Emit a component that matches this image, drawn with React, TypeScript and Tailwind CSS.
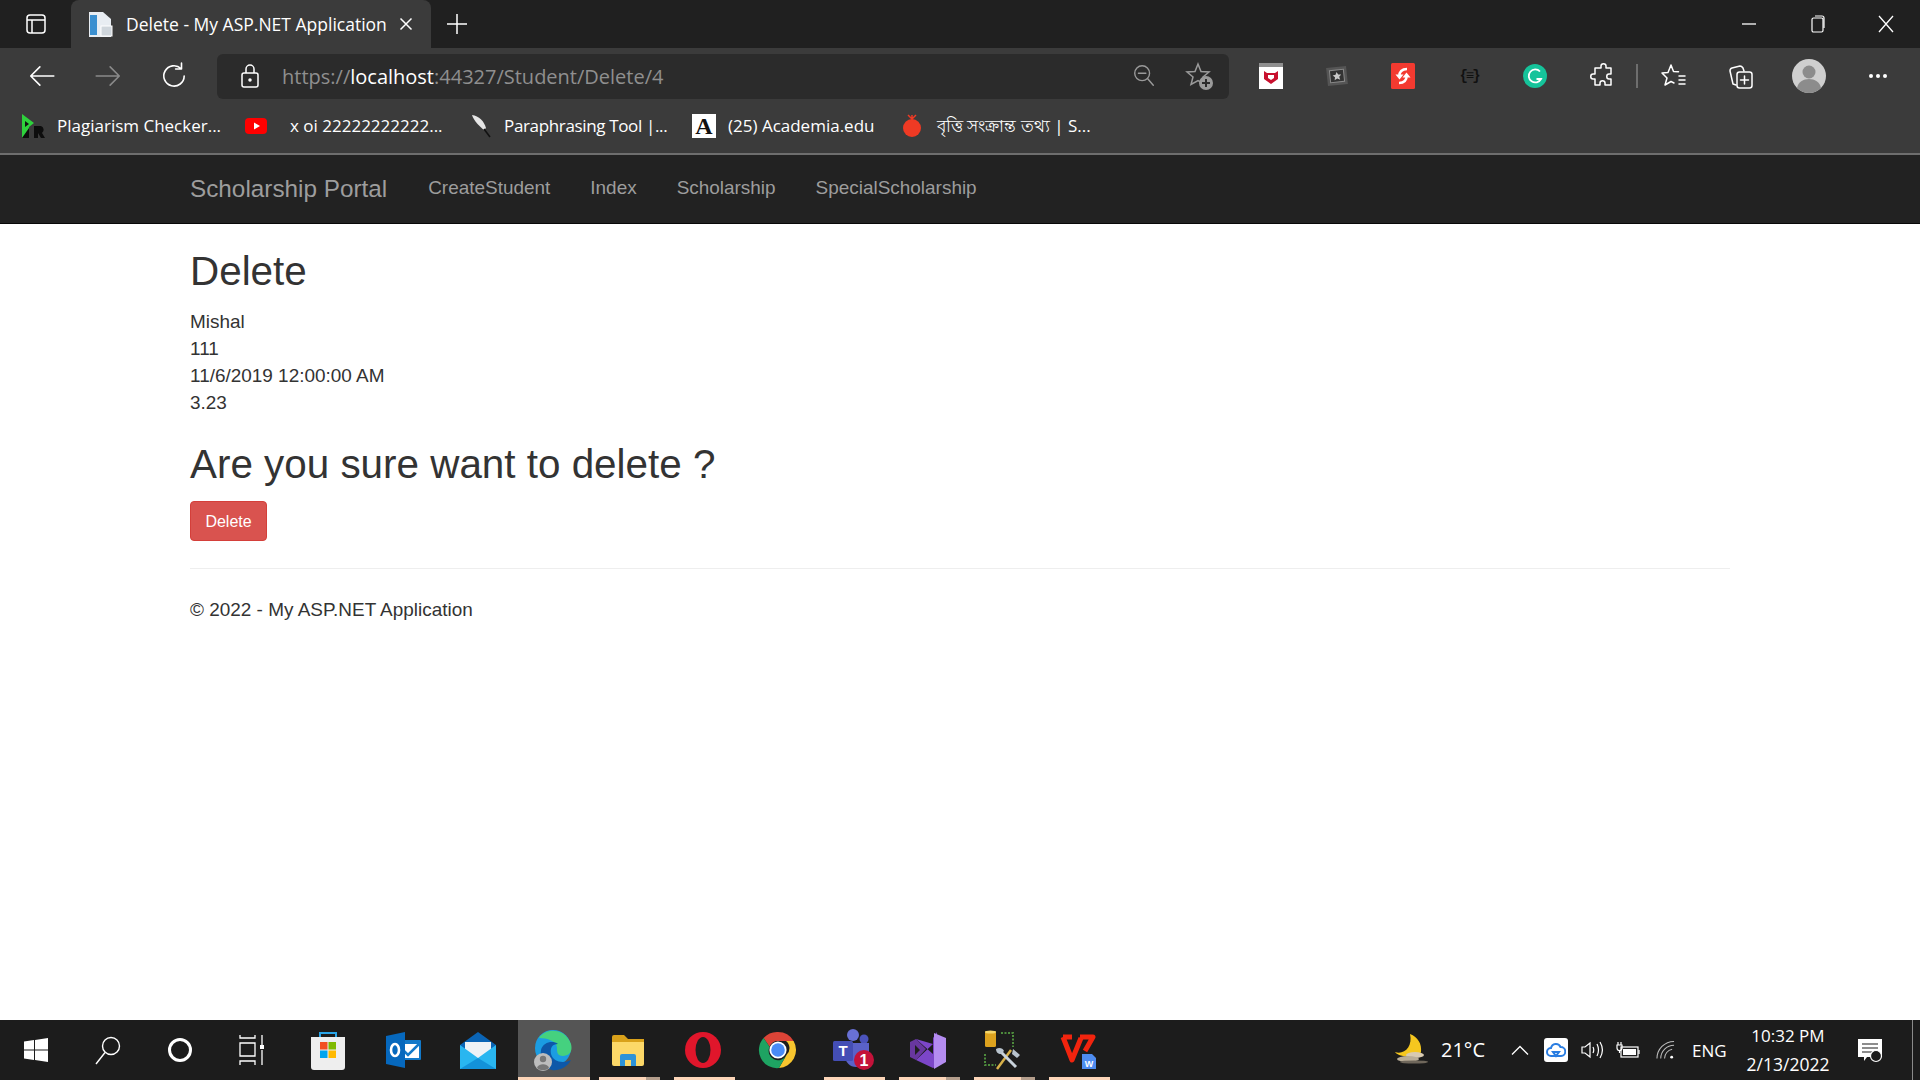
import React from "react";

const ui = "font-['Open_Sans','Noto_Sans',sans-serif]";

const Stroke = ({ size = 28, children }: { size?: number; children: React.ReactNode }) => (
  <svg width={size} height={size} viewBox="0 0 28 28" fill="none" stroke="currentColor" strokeWidth="1.5" strokeLinecap="round" strokeLinejoin="round">
    {children}
  </svg>
);

const Slot = ({ w, children }: { w: string; children: React.ReactNode }) => (
  <div className={`flex h-full items-center justify-center ${w}`}>{children}</div>
);

const Bookmark = ({ icon, text, w, cls = "", iconW = "w-[36px]" }: { icon: React.ReactNode; text: string; w: string; cls?: string; iconW?: string }) => (
  <div className={`flex items-center ${w}`}>
    <div className={`flex shrink-0 items-center ${iconW}`}>{icon}</div>
    <span className={`whitespace-nowrap text-[17px] text-white ${cls}`}>{text}</span>
  </div>
);

const TaskApp = ({ children, line, active, w = "w-[75px]" }: { children: React.ReactNode; line?: "plain" | "stack"; active?: boolean; w?: string }) => (
  <div className={`relative flex h-full shrink-0 items-center justify-center ${w}`}>
    {active && <div className="absolute inset-y-0 left-[3px] w-[72px] bg-[#555555]" />}
    <div className="relative flex">{children}</div>
    {active && <div className="absolute bottom-0 left-[3px] h-[3px] w-[72px] bg-[#fcd5b8]" />}
    {line && <div className="absolute bottom-0 left-[9px] h-[3px] w-[61px] bg-[#fcd5b8]" />}
    {line === "stack" && <div className="absolute bottom-0 left-[56px] h-[3px] w-[14px] bg-[#b49e8c]" />}
  </div>
);

const Store = () => (
  <svg width="40" height="40" viewBox="0 0 40 40">
    <path d="M12 7V3h16v4" fill="none" stroke="#2aa5e8" strokeWidth="2" />
    <path d="M3 7h34v30a3 3 0 0 1-3 3H6a3 3 0 0 1-3-3z" fill="#eeeeee" />
    <rect x="12" y="12" width="7.5" height="7.5" fill="#f25022" />
    <rect x="20.5" y="12" width="7.5" height="7.5" fill="#7fba00" />
    <rect x="12" y="20.5" width="7.5" height="7.5" fill="#00a4ef" />
    <rect x="20.5" y="20.5" width="7.5" height="7.5" fill="#ffb900" />
  </svg>
);

const Outlook = () => (
  <svg width="40" height="40" viewBox="0 0 40 40">
    <rect x="18" y="10" width="20" height="20" rx="1" fill="#1279c9" />
    <path d="M20 14h16v14H20z" fill="#fff" />
    <path d="M20 20l5 5 11-11" fill="none" stroke="#1279c9" strokeWidth="2.5" />
    <path d="M3 6l19-4v36L3 34z" fill="#0668bd" />
    <ellipse cx="12" cy="20" rx="4" ry="6" fill="none" stroke="#fff" strokeWidth="2.6" />
  </svg>
);

const Mail = () => (
  <svg width="40" height="40" viewBox="0 0 40 40">
    <path d="M2 15L20 2l18 13v24H2z" fill="#0a64b5" />
    <path d="M7 12h26v10L20 30 7 22z" fill="#eef2f6" />
    <path d="M2 15l18 13 18-13v24H2z" fill="#29b6f0" />
    <path d="M2 39l18-11 18 11z" fill="#1392d9" />
  </svg>
);

const Edge = () => (
  <svg width="40" height="44" viewBox="0 0 40 44">
    <circle cx="20" cy="20" r="18" fill="#1b9de2" />
    <path d="M6 10C12 0 32-1 38 16c2 8-2 12-8 12-6 0-6-4-6-8 0-7-10-10-18-10z" fill="#45d17f" />
    <path d="M8 22c2-8 12-10 17-6-6 0-8 4-7 10 2 8 12 10 20 6-4 8-13 11-19 10C12 40 6 32 8 22z" fill="#0e58a8" />
    <circle cx="10" cy="34" r="9" fill="#bdbdbd" />
    <circle cx="10" cy="31" r="3.2" fill="#777" />
    <path d="M4 40c1-5 11-5 12 0-3 3-9 3-12 0z" fill="#777" />
  </svg>
);

const Explorer = () => (
  <svg width="36" height="36" viewBox="0 0 36 36">
    <path d="M2 5a2 2 0 0 1 2-2h10l4 4h16v6H2z" fill="#d9a11a" />
    <path d="M2 10h32v22a2 2 0 0 1-2 2H4a2 2 0 0 1-2-2z" fill="#fcd868" />
    <path d="M10 34V24a2 2 0 0 1 2-2h12a2 2 0 0 1 2 2v10h-5v-6h-6v6z" fill="#2d93d8" />
  </svg>
);

const Opera = () => (
  <svg width="40" height="40" viewBox="0 0 40 40">
    <circle cx="20" cy="20" r="18" fill="#e0162b" />
    <ellipse cx="20" cy="20" rx="7.5" ry="13" fill="#1f1f1f" />
  </svg>
);

const Chrome = () => (
  <svg width="40" height="40" viewBox="0 0 40 40">
    <path d="M20 2a18 18 0 0 1 15.6 9H20a9 9 0 0 0-8.4 5.8L5.6 8A18 18 0 0 1 20 2z" fill="#db4437" />
    <path d="M35.6 11A18 18 0 0 1 21 38l7.8-13.5A9 9 0 0 0 28 11z" fill="#f7c52e" />
    <path d="M5.6 8a18 18 0 0 0 15.4 30l7.5-13a9 9 0 0 1-16.9-8.2z" fill="#1ea362" />
    <circle cx="20" cy="20" r="8.6" fill="#fff" />
    <circle cx="20" cy="20" r="6.8" fill="#4a8bf5" />
  </svg>
);

const Teams = () => (
  <svg width="44" height="44" viewBox="0 0 44 44">
    <circle cx="22" cy="7" r="6" fill="#6870d4" />
    <circle cx="33" cy="11" r="4.5" fill="#4b53bc" />
    <path d="M14 15h24v14a10 10 0 0 1-10 10h-3a11 11 0 0 1-11-11z" fill="#5a62c9" />
    <rect x="2" y="13" width="20" height="20" rx="1.5" fill="#444eb5" />
    <text x="12" y="28" textAnchor="middle" fontSize="15" fontWeight="700" fill="#fff" fontFamily="Liberation Sans">T</text>
    <circle cx="33" cy="32" r="10" fill="#c4123a" />
    <text x="33" y="38" textAnchor="middle" fontSize="16" fontWeight="700" fill="#fff" fontFamily="Liberation Sans">1</text>
  </svg>
);

const VisualStudio = () => (
  <svg width="38" height="40" viewBox="0 0 38 40">
    <path d="M1 12l6-3 10 10-10 11-6-3z" fill="#68379f" />
    <path d="M6 15v10l5-5z" fill="#1f1f1f" />
    <path d="M7 9l17 15V8l4-6v34l-4 2L7 30l17-16" fill="#7c46c8" />
    <path d="M25 3l12 5v24l-12 7z" fill="#b48cf0" />
  </svg>
);

const SqlTools = () => (
  <svg width="38" height="40" viewBox="0 0 38 40">
    <rect x="1" y="1" width="11" height="16" rx="1.500" fill="#dda21e" />
    <ellipse cx="6.500" cy="2" rx="5.500" ry="1.500" fill="#f5d66a" />
    <path d="M17 3h12v14M1 24v11h11" fill="none" stroke="#4d8b3c" strokeWidth="2" strokeDasharray="2 1.500" />
    <path d="M13 39l14-19" stroke="#d8b14a" strokeWidth="2.500" />
    <path d="M16 21l16 16" stroke="#c9d3dc" strokeWidth="3" />
    <path d="M29 19l7 6-3 3-5-4zM12 19c3-2 7-1 8 2l-3 3c-3 0-5-2-5-5z" fill="#b8c3cd" />
  </svg>
);

const Wps = () => (
  <svg width="38" height="40" viewBox="0 0 38 40">
    <path d="M4 7h9M4 7l9 23 9-22" fill="none" stroke="#f2240e" strokeWidth="5" strokeLinejoin="round" />
    <path d="M21 7h13l-8 14" fill="none" stroke="#f2240e" strokeWidth="5" strokeLinejoin="round" />
    <path d="M23 24h10l4 4v11H23z" fill="#4e8cf0" />
    <text x="30" y="37" textAnchor="middle" fontSize="9" fontWeight="700" fill="#fff" fontFamily="Liberation Sans">W</text>
  </svg>
);

const Moon = () => (
  <svg width="36" height="32" viewBox="0 0 36 32">
    <path d="M18 0c8 3 12 10 11 18-1 4-10 6-18 4C5 21 3 18 3 18c9 3 18-5 15-18z" fill="#f5c71f" />
    <ellipse cx="23" cy="21" rx="9" ry="3" fill="#d8cab2" />
    <ellipse cx="16" cy="25" rx="11" ry="3" fill="#b9ad98" />
    <ellipse cx="22" cy="28" rx="14" ry="1.6" fill="#6f675b" />
  </svg>
);

export default function App() {
  return (
    <div className={`flex h-[1080px] w-[1920px] flex-col overflow-hidden bg-white ${ui}`}>
      {/* title bar */}
      <div className="flex h-[48px] shrink-0 items-end bg-[#202020] text-white">
        <Slot w="w-[71px]">
          <svg width="24" height="24" viewBox="0 0 24 24" fill="none" stroke="currentColor" strokeWidth="1.5">
            <rect x="3" y="3" width="18" height="18" rx="3" />
            <path d="M3 8h18M8 8v13" />
          </svg>
        </Slot>
        <div className="flex h-[48px] w-[360px] items-center rounded-t-[8px] bg-[#3b3b3b] pl-[16px]">
          <svg width="26" height="28" viewBox="0 0 26 28" className="shrink-0">
            <path d="M2 2h14l8 7v18H2z" fill="#e8edf2" />
            <rect x="3" y="5" width="7" height="20" fill="#3a8fd0" />
            <rect x="14" y="16" width="11" height="10" fill="#cfd6dc" stroke="#fff" />
          </svg>
          <span className="ml-[13px] whitespace-nowrap text-[17.5px]">Delete - My ASP.NET Application</span>
          <svg width="16" height="16" viewBox="0 0 16 16" className="ml-[11px] shrink-0" stroke="currentColor" strokeWidth="1.5">
            <path d="M2.5 2.5l11 11M13.5 2.5l-11 11" />
          </svg>
        </div>
        <Slot w="w-[52px]">
          <svg width="22" height="22" viewBox="0 0 22 22" stroke="currentColor" strokeWidth="1.5">
            <path d="M11 1v20M1 11h20" />
          </svg>
        </Slot>
        <div className="flex-1" />
        <Slot w="w-[69px]">
          <svg width="16" height="16" viewBox="0 0 16 16" stroke="currentColor" strokeWidth="1.3"><path d="M1 8h14" /></svg>
        </Slot>
        <Slot w="w-[69px]">
          <svg width="16" height="18" viewBox="0 0 16 18" fill="none" stroke="currentColor" strokeWidth="1.2">
            <rect x="2" y="3" width="11" height="14" rx="1.5" />
            <path d="M5 1h7a2 2 0 0 1 2 2v10" />
          </svg>
        </Slot>
        <Slot w="w-[68px]">
          <svg width="18" height="18" viewBox="0 0 18 18" stroke="currentColor" strokeWidth="1.3"><path d="M2 1l14 16M16 1L2 17" /></svg>
        </Slot>
      </div>

      {/* toolbar */}
      <div className="flex h-[56px] shrink-0 items-center bg-[#3b3b3b] pl-[9px] text-white">
        <Slot w="w-[66px]">
          <Stroke size={30}><path d="M25 14H4M12 5.5L3.5 14l8.5 8.5" /></Stroke>
        </Slot>
        <Slot w="w-[66px]">
          <span className="text-[#8a8a8a]"><Stroke size={30}><path d="M3 14h21M16 5.5l8.500 8.500-8.500 8.500" /></Stroke></span>
        </Slot>
        <Slot w="w-[66px]">
          <Stroke size={30}><path d="M23.500 14a9.500 9.500 0 1 1-3-7M21 2v5.500h-5.500" /></Stroke>
        </Slot>
        <div className="ml-[10px] flex h-[45px] w-[1012px] items-center rounded-[6px] bg-[#2b2b2b]">
          <Slot w="w-[65px]">
            <svg width="20" height="24" viewBox="0 0 20 24" fill="none" stroke="currentColor" strokeWidth="1.500">
              <rect x="2" y="9" width="16" height="14" rx="2" />
              <path d="M6 9V5a4 4 0 0 1 8 0v4" />
              <circle cx="10" cy="16" r="1" fill="currentColor" />
            </svg>
          </Slot>
          <div className="flex-1 whitespace-nowrap pt-[1px] text-[20px] text-[#8f8f8f]">
            https://<span className="text-white">localhost</span>:44327/Student/Delete/4
          </div>
          <Slot w="w-[54px]">
            <span className="text-[#9a9a9a]">
              <Stroke size={26}><circle cx="12" cy="11" r="8" /><path d="M8 11h8M18 17l6 7" /></Stroke>
            </span>
          </Slot>
          <Slot w="w-[58px]">
            <svg width="30" height="30" viewBox="0 0 30 30" fill="none" stroke="#9a9a9a" strokeWidth="1.500">
              <path d="M13 3l3 7.500 8 .500-6 5 2 7.500-7-4-7 4 2-7.500-6-5 8-.500z" />
              <circle cx="21" cy="22" r="7" fill="#9a9a9a" stroke="none" />
              <path d="M21 18v8M17 22h8" stroke="#2b2b2b" strokeWidth="2" />
            </svg>
          </Slot>
        </div>
        <div className="w-[9px]" />
        <Slot w="w-[66px]">
          <svg width="24" height="26" viewBox="0 0 24 26">
            <rect width="24" height="26" fill="#ffffff" />
            <rect width="24" height="4" fill="#8f8f8f" />
            <path d="M5 8l3 2h8l3-2v8l-7 5-7-5z" fill="#c8102e" />
            <path d="M9 12h6v3l-3 2-3-2z" fill="#fff" />
          </svg>
        </Slot>
        <Slot w="w-[66px]">
          <svg width="24" height="24" viewBox="0 0 24 24" className="-rotate-6">
            <rect x="2" y="3" width="20" height="18" fill="#555" />
            <rect x="5" y="6" width="14" height="12" fill="#333" stroke="#8a8a8a" />
            <path d="M12 8l1.300 2.700 3 .300-2.200 2 .700 3-2.800-1.500L9.200 16l.700-3-2.200-2 3-.300z" fill="#c9c9c9" />
          </svg>
        </Slot>
        <Slot w="w-[66px]">
          <svg width="24" height="26" viewBox="0 0 24 26" fill="none">
            <rect width="24" height="26" rx="1.500" fill="#f33a30" />
            <path d="M16 6c-5 0-8 3-7.500 7" stroke="#fff" strokeWidth="2.500" />
            <path d="M4.500 11.500h8l-4 5z" fill="#fff" />
            <path d="M8 20c5 0 8-3 7.500-7" stroke="#fff" strokeWidth="2.500" />
            <path d="M11.500 14.500h8l-4-5z" fill="#fff" />
          </svg>
        </Slot>
        <Slot w="w-[66px]">
          <span className="font-['Liberation_Mono',monospace] text-[14px] font-bold tracking-[-2px] text-[#111111]">{"{≡}"}</span>
        </Slot>
        <Slot w="w-[66px]">
          <svg width="24" height="24" viewBox="0 0 24 24" fill="none">
            <circle cx="12" cy="12" r="12" fill="#15c39a" />
            <path d="M17 7.500A6.500 6.500 0 1 0 18 15h-4.500" stroke="#fff" strokeWidth="1.800" />
          </svg>
        </Slot>
        <Slot w="w-[70px]">
          <Stroke>
            <path d="M12 4c0-3 5-3 5 0v2h5v6h-2c-3 0-3 5 0 5h2v6h-6v-2c0-3-5-3-5 0v2H6v-6H4c-3 0-3-5 0-5h2V6h6z" />
          </Stroke>
        </Slot>
        <div className="-ml-[2px] mr-[3px] h-[24px] w-[2px] bg-[#6e6e6e]" />
        <Slot w="w-[66px]">
          <Stroke>
            <path d="M11 3l2.500 6.500 5 .300M8 10.500l-6 .500 5 5-2 7 6-3.500 3 1.500M8 10.500L11 3M19 14h6M19 18h6M19 22h6" />
          </Stroke>
        </Slot>
        <Slot w="w-[67px]">
          <Stroke>
            <path d="M9 23l-3-1-3-13a3 3 0 0 1 2-3l8-2c1 0 2 .500 3 2l1 3" />
            <rect x="10" y="10" width="15" height="16" rx="2.500" />
            <path d="M17.500 14v8M13.500 18h8" />
          </Stroke>
        </Slot>
        <Slot w="w-[69px]">
          <svg width="34" height="34" viewBox="0 0 34 34">
            <circle cx="17" cy="17" r="17" fill="#cfcfcf" />
            <circle cx="17" cy="13" r="6.500" fill="#8c8c8c" />
            <path d="M5 29c2-12 22-12 24 0a17 17 0 0 1-24 0z" fill="#8c8c8c" />
          </svg>
        </Slot>
        <Slot w="w-[69px]">
          <div className="flex gap-[3px]">
            <div className="h-[4px] w-[4px] rounded-full bg-white" />
            <div className="h-[4px] w-[4px] rounded-full bg-white" />
            <div className="h-[4px] w-[4px] rounded-full bg-white" />
          </div>
        </Slot>
      </div>

      {/* bookmarks */}
      <div className="flex h-[49px] shrink-0 items-center bg-[#3b3b3b] pb-[6px] pl-[21px]">
        <Bookmark
          w="w-[224px]"
          text="Plagiarism Checker..."
          icon={
            <svg width="24" height="28" viewBox="0 0 24 28">
              <path d="M1 2l12 9-5 4v11H1z" fill="#2ed13c" />
              <path d="M4 9l4 3-4 3z" fill="#111" />
              <path d="M1 26l7-10v10zM13 14h7a4 4 0 0 1 1 7l3 5h-4l-3-5v5h-4z" fill="#0d0d0d" />
            </svg>
          }
        />
        <Bookmark
          w="w-[223px]"
          iconW="w-[45px]"
          text="x oi 22222222222..."
          icon={
            <svg width="22" height="16" viewBox="0 0 22 16">
              <rect width="22" height="16" rx="4" fill="#ff0000" />
              <path d="M9 4.500l6 3.500-6 3.500z" fill="#fff" />
            </svg>
          }
        />
        <Bookmark
          w="w-[224px]"
          text="Paraphrasing Tool |..."
          cls="tracking-[-0.35px]"
          icon={
            <svg width="20" height="24" viewBox="0 0 20 24" className="ml-[3px]">
              <path d="M1 1c7 1 12 6 14 13l-2 2C8 12 3 7 1 1z" fill="#e6e6e6" />
              <path d="M13 15l6 8" stroke="#111" strokeWidth="1.500" />
            </svg>
          }
        />
        <Bookmark
          w="w-[209px]"
          text="(25) Academia.edu"
          icon={
            <div className="flex h-[24px] w-[24px] items-center justify-center bg-white font-['Liberation_Serif',serif] text-[24px] font-bold leading-none text-[#111111]">A</div>
          }
        />
        <Bookmark
          w="w-[260px]"
          text="বৃত্তি সংক্রান্ত তথ্য | S..."
          icon={
            <svg width="22" height="24" viewBox="0 0 22 24">
              <circle cx="11" cy="14" r="9" fill="#ef3a24" />
              <path d="M11 5l-4-4M11 5l4-4M11 5V1" stroke="#ef3a24" strokeWidth="1.500" />
            </svg>
          }
        />
      </div>
      <div className="h-[2px] shrink-0 bg-[#6e6e6e]" />

      {/* site */}
      <div className="flex-1 font-['Liberation_Sans',Arial,sans-serif] text-[18.95px] leading-[27px] text-[#333333]">
        <nav className="flex h-[69px] items-center border-b border-[#080808] bg-[#222222] pb-[2px] pl-[190px] text-[#9d9d9d]">
          <span className="text-[24.3px]">Scholarship Portal</span>
          <div className="ml-[41px] flex -translate-y-[1px] gap-[40px]">
            <span>CreateStudent</span>
            <span>Index</span>
            <span>Scholarship</span>
            <span>SpecialScholarship</span>
          </div>
        </nav>
        <main className="mx-[190px]">
          <h2 className="mt-[25px] text-[40.4px] leading-[44px]">Delete</h2>
          <div className="mt-[15px]">
            <div>Mishal</div>
            <div>111</div>
            <div>11/6/2019 12:00:00 AM</div>
            <div>3.23</div>
          </div>
          <h3 className="mt-[26px] text-[40.4px] leading-[44px]">Are you sure want to delete ?</h3>
          <button className="mt-[15px] block h-[40px] w-[77px] rounded-[4px] border border-[#d43f3a] bg-[#d9534f] text-[16px] text-white">Delete</button>
          <hr className="mt-[27px] border-t border-[#eeeeee]" />
          <footer className="mt-[27px]">© 2022 - My ASP.NET Application</footer>
        </main>
      </div>

      {/* taskbar */}
      <div className="flex h-[60px] shrink-0 items-center bg-[#1c1c1c] text-white">
        <Slot w="w-[72px]">
          <svg width="24" height="24" viewBox="0 0 24 24" fill="#fff">
            <path d="M0 3.500l10-1.400v9.300H0zM11 2l13-2v11.400H11zM0 12.500h10v9.400L0 20.500zM11 12.500h13V24l-13-1.900z" />
          </svg>
        </Slot>
        <Slot w="w-[72px]">
          <svg width="26" height="30" viewBox="0 0 26 30" fill="none" stroke="#fff" strokeWidth="1.400">
            <circle cx="16" cy="11" r="8.500" />
            <path d="M10 17.500L1 29" />
          </svg>
        </Slot>
        <Slot w="w-[72px]">
          <div className="h-[24px] w-[24px] rounded-full border-[3.500px] border-white" />
        </Slot>
        <Slot w="w-[72px]">
          <svg width="26" height="32" viewBox="0 0 26 32" fill="none" stroke="#fff" strokeWidth="1.300">
            <path d="M1 1v3h15V1M1 9h15v13H1zM1 31v-4h15v4M23 1v10M23 16v15" />
            <rect x="21" y="11" width="4" height="4" fill="#fff" stroke="none" />
          </svg>
        </Slot>
        <div className="w-[2px] shrink-0" />
        <TaskApp><Store /></TaskApp>
        <TaskApp><Outlook /></TaskApp>
        <TaskApp><Mail /></TaskApp>
        <TaskApp active><Edge /></TaskApp>
        <TaskApp line="stack"><Explorer /></TaskApp>
        <TaskApp line="plain"><Opera /></TaskApp>
        <TaskApp><Chrome /></TaskApp>
        <TaskApp line="plain"><Teams /></TaskApp>
        <TaskApp line="stack"><VisualStudio /></TaskApp>
        <TaskApp line="stack"><SqlTools /></TaskApp>
        <TaskApp line="plain"><Wps /></TaskApp>
        <div className="w-[277px] shrink-0" />
        <Moon />
        <span className="ml-[13px] w-[48px] whitespace-nowrap text-[20px]">21°C</span>
        <div className="ml-[19px] flex w-[24px] justify-center">
          <svg width="18" height="10" viewBox="0 0 18 10" fill="none" stroke="#fff" strokeWidth="1.300"><path d="M1 9.500l8-8 8 8" /></svg>
        </div>
        <div className="ml-[12px] flex h-[24px] w-[24px] items-center justify-center rounded-[3px] bg-white">
          <svg width="20" height="16" viewBox="0 0 20 16" fill="none" stroke="#2a7de1" strokeWidth="2">
            <path d="M5 14a4 4 0 0 1 0-8 5 5 0 0 1 9.500-1A4.500 4.500 0 0 1 15 14zM10 14l3-4H7z" />
          </svg>
        </div>
        <div className="ml-[13px] flex w-[22px] justify-center">
          <svg width="22" height="18" viewBox="0 0 22 18" fill="none" stroke="#fff" strokeWidth="1.200">
            <path d="M1 6h3l5-4v14l-5-4H1zM12 6c1 2 1 4 0 6M16 3c2 4 2 8 0 12M19 1c3 5 3 11 0 16" />
          </svg>
        </div>
        <div className="ml-[13px] flex w-[24px] justify-center">
          <svg width="24" height="18" viewBox="0 0 24 18" fill="none" stroke="#fff" strokeWidth="1.200">
            <path d="M2 1v3M5 1v3M1 4h5v3a2.500 2.500 0 0 1-5 0zM3.500 9.500V12" />
            <rect x="5" y="6" width="17" height="10" />
            <rect x="7" y="8" width="13" height="6" fill="#fff" stroke="none" />
            <path d="M23 9v4" />
          </svg>
        </div>
        <div className="ml-[16px] flex w-[19px] justify-center">
          <svg width="20" height="20" viewBox="0 0 20 20" fill="none" stroke="#bdbdbd" strokeWidth="1.100">
            <path d="M1 19A18 18 0 0 1 19 1M5 19A14 14 0 0 1 19 5M9 19a10 10 0 0 1 8-9.800" />
            <circle cx="16.500" cy="17.500" r="1.500" fill="#fff" stroke="none" />
          </svg>
        </div>
        <span className="ml-[17px] w-[34px] whitespace-nowrap text-[17px] leading-none">ENG</span>
        <div className="ml-[21px] flex w-[82px] flex-col items-center whitespace-nowrap text-[17px] leading-[28px]">
          <span>10:32 PM</span>
          <span className="text-[17.5px]">2/13/2022</span>
        </div>
        <div className="ml-[29px] flex w-[25px] justify-center">
          <svg width="25" height="26" viewBox="0 0 25 26">
            <path d="M0 2h24v18H9l-3 4v-4H0z" fill="#fff" />
            <path d="M4 7h16M4 11h16M4 15h10" stroke="#1c1c1c" strokeWidth="1.200" />
            <circle cx="18" cy="19" r="5.500" fill="#1c1c1c" stroke="#fff" strokeWidth="1.200" />
          </svg>
        </div>
        <div className="ml-[29px] h-full w-[1px] bg-[#8a8a8a]" />
      </div>
    </div>
  );
}
